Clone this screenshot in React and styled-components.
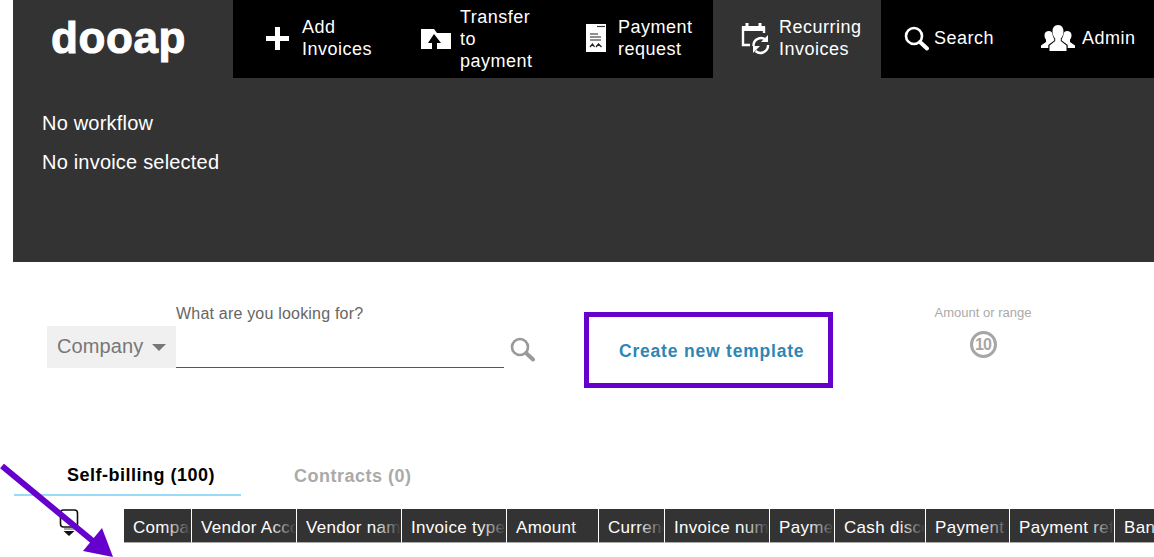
import React from "react";
import styled, { createGlobalStyle } from "styled-components";

const GlobalStyle = createGlobalStyle`
  html, body {
    margin: 0;
    padding: 0;
    background: #fff;
    font-family: "Liberation Sans", Arial, sans-serif;
    overflow: hidden;
  }
`;

const navItems = [
  { label: "Add Invoices", icon: <PlusIcon />, width: 170, pad: 32, gap: 12, textWidth: 80, lift: 2 },
  { label: "Transfer to payment", icon: <FolderIcon />, width: 160, pad: 18, gap: 9, textWidth: 80, lift: 0 },
  { label: "Payment request", icon: <DocIcon />, width: 150, pad: 23, gap: 12, textWidth: 90, lift: 2 },
  { label: "Recurring Invoices", icon: <CalendarIcon />, width: 168, pad: 28, gap: 8, textWidth: 90, lift: 2, active: true },
  { label: "Search", icon: <SearchIcon />, width: 139, pad: 23, gap: 5, textWidth: 80, lift: 2 },
  { label: "Admin", icon: <AdminIcon />, width: 134, pad: 21, gap: 7, textWidth: 70, lift: 2 },
];

const columns = [
  ["Company", 68],
  ["Vendor Account", 105],
  ["Vendor name", 105],
  ["Invoice type", 105],
  ["Amount", 92],
  ["Currency", 66],
  ["Invoice number", 105],
  ["Payment", 65],
  ["Cash discount", 91],
  ["Payment", 84],
  ["Payment reference", 105],
  ["Bank", 60],
];

export default function App() {
  return (
    <Page>
      <GlobalStyle />
      <Header>
        <TopRow>
          <Logo>dooap</Logo>
          <Nav>
            {navItems.map((item) => (
              <NavItem
                key={item.label}
                $width={item.width}
                $pad={item.pad}
                $gap={item.gap}
                $lift={item.lift}
                $active={item.active}
              >
                {item.icon}
                <NavLabel $width={item.textWidth}>{item.label}</NavLabel>
              </NavItem>
            ))}
          </Nav>
        </TopRow>
        <Status>
          <StatusLine>No workflow</StatusLine>
          <StatusLine>No invoice selected</StatusLine>
        </Status>
      </Header>

      <Toolbar>
        <SearchForm>
          <SearchLabel>What are you looking for?</SearchLabel>
          <Select>
            Company
            <Caret />
          </Select>
          <SearchInput />
        </SearchForm>
        <SearchButton>
          <SearchIcon color="#999" />
        </SearchButton>
        <CreateButton>Create new template</CreateButton>
        <Range>
          <RangeLabel>Amount or range</RangeLabel>
          <RangeBadge>10</RangeBadge>
        </Range>
      </Toolbar>

      <Tabs>
        <Tab $active>Self-billing (100)</Tab>
        <Tab>Contracts (0)</Tab>
      </Tabs>

      <TableRow>
        <ExportSlot>
          <ExportIcon />
        </ExportSlot>
        <TableHead>
          {columns.map(([name, width], i) => (
            <HeadCell key={i} $width={width}>
              {name}
            </HeadCell>
          ))}
        </TableHead>
      </TableRow>

      <Arrow viewBox="0 0 120 100" width="120" height="100">
        <line x1="2" y1="2" x2="94" y2="78" stroke="#6600cc" strokeWidth="6" />
        <polygon points="113,93 83,87 102,64" fill="#6600cc" />
      </Arrow>
    </Page>
  );
}

function PlusIcon() {
  return (
    <svg width="25" height="25" viewBox="0 0 25 25" fill="#fff" style={{ flex: "none" }}>
      <path d="M10 1h5v9h9v5h-9v9h-5v-9H1v-5h9z" />
    </svg>
  );
}

function FolderIcon() {
  return (
    <svg width="30" height="22" viewBox="0 0 30 22" style={{ flex: "none" }}>
      <path d="M0 1h13l3 4h14v16H0z" fill="#fff" />
      <path d="M13 6l7 9h-4v6h-5v-6H7z" fill="#000" />
    </svg>
  );
}

function DocIcon() {
  return (
    <svg width="20" height="28" viewBox="0 0 20 28" style={{ flex: "none" }}>
      <path d="M0 0h20v28H0z" fill="#fff" />
      <path d="M11 2.500h8" stroke="#333" strokeWidth="1.200" />
      <path d="M4 10h8M4 13h11M4 16h11" stroke="#222" strokeWidth="1.100" />
      <path d="M4 23l2.500-3 2 3M10 23l2.500-3 3 3" stroke="#222" strokeWidth="1.300" fill="none" />
    </svg>
  );
}

function CalendarIcon() {
  return (
    <svg width="30" height="34" viewBox="0 0 30 34" fill="none" stroke="#fff" style={{ flex: "none" }}>
      <path d="M9 24H2V7h21v5" strokeWidth="2.400" />
      <path d="M1 5h23v5H1z" fill="#fff" stroke="none" />
      <path d="M6 2v5M19 2v5" strokeWidth="3" />
      <path d="M12.500 25a7.500 7.500 0 0 1 12.500-6" strokeWidth="2.400" />
      <path d="M27 24a7.500 7.500 0 0 1-12.500 6" strokeWidth="2.400" />
      <path d="M27 14v7h-7z" fill="#fff" stroke="none" />
      <path d="M12 32v-7h7z" fill="#fff" stroke="none" />
    </svg>
  );
}

function SearchIcon({ color = "#fff" }) {
  return (
    <svg width="25" height="25" viewBox="0 0 25 25" fill="none" stroke={color} style={{ flex: "none" }}>
      <circle cx="10" cy="10" r="8" strokeWidth="2.600" />
      <path d="M16 16l7 6.500" strokeWidth="4" strokeLinecap="round" />
    </svg>
  );
}

function AdminIcon() {
  return (
    <svg width="34" height="26" viewBox="0 0 34 26" fill="#fff" style={{ flex: "none" }}>
      <path d="M17 0c4 0 5.500 3 5.500 6.500 0 3-1.200 5.500-2.700 7v2.500l5.700 4.500V26H8.500v-5.500l5.700-4.500v-2.500c-1.500-1.500-2.700-4-2.700-7C11.500 3 13 0 17 0z" />
      <path d="M8 6c2 0 3 1 3.300 2.500.3 2 1 4 2 5.500v1.500l-6 4.500V23H0v-2.500l5-3.500v-2.500C4 13.500 3.500 12 3.500 10 3.500 7.500 5.500 6 8 6z" />
      <path d="M26 6c-2 0-3 1-3.300 2.500-.3 2-1 4-2 5.500v1.500l6 4.500V23H34v-2.500l-5-3.500v-2.500c1-1 1.500-2.500 1.500-4.500C30.500 7.500 28.500 6 26 6z" />
    </svg>
  );
}

function ExportIcon() {
  return (
    <svg width="20" height="27" viewBox="0 0 20 27" fill="none">
      <rect x="1.500" y="1" width="17" height="17" rx="3" stroke="#111" strokeWidth="1.600" />
      <path d="M5 20h10" stroke="#555" strokeWidth="1" />
      <path d="M4.500 22h11L10 27z" fill="#111" />
    </svg>
  );
}

const Page = styled.div`
  position: relative;
  width: 1154px;
  height: 557px;
  padding-left: 13px;
  box-sizing: border-box;
  overflow: hidden;
`;

const Header = styled.header`
  background: #333;
  height: 262px;
  color: #fff;
`;

const TopRow = styled.div`
  display: flex;
  height: 78px;
`;

const Logo = styled.div`
  width: 220px;
  flex: none;
  box-sizing: border-box;
  padding: 10px 0 0 38px;
  font-size: 44px;
  line-height: 56px;
  font-weight: 700;
  letter-spacing: 0.6px;
  -webkit-text-stroke: 1px #fff;
`;

const Nav = styled.nav`
  display: flex;
  flex: 1;
  background: #000;
  overflow: hidden;
`;

const NavItem = styled.a`
  display: flex;
  align-items: center;
  flex: none;
  box-sizing: border-box;
  width: ${(p) => p.$width}px;
  padding-left: ${(p) => p.$pad}px;
  padding-bottom: ${(p) => p.$lift}px;
  gap: ${(p) => p.$gap}px;
  background: ${(p) => (p.$active ? "#333" : "transparent")};
`;

const NavLabel = styled.span`
  width: ${(p) => p.$width}px;
  font-size: 18px;
  line-height: 22px;
  letter-spacing: 0.5px;
`;

const Status = styled.div`
  padding: 26px 0 0 29px;
`;

const StatusLine = styled.div`
  font-size: 20px;
  line-height: 39px;
  letter-spacing: 0.2px;
`;

const Toolbar = styled.div`
  display: flex;
  align-items: flex-start;
  padding: 50px 0 0 34px;
`;

const SearchForm = styled.div`
  display: grid;
  grid-template-columns: 129px 328px;
  grid-template-rows: 14px 42px;
  flex: none;
`;

const SearchLabel = styled.div`
  grid-column: 2;
  font-size: 16px;
  line-height: 0;
  padding-top: 2px;
  letter-spacing: 0.2px;
  color: #666;
`;

const Select = styled.div`
  grid-row: 2;
  display: flex;
  align-items: center;
  gap: 9px;
  padding: 0 0 2px 10px;
  background: #f0f0f0;
  font-size: 20px;
  letter-spacing: 0.1px;
  color: #777;
`;

const Caret = styled.span`
  width: 0;
  height: 0;
  border-left: 7px solid transparent;
  border-right: 7px solid transparent;
  border-top: 7px solid #777;
  margin-top: 3px;
`;

const SearchInput = styled.div`
  grid-row: 2;
  border-bottom: 1px solid #555;
`;

const SearchButton = styled.div`
  flex: none;
  margin: 25px 0 0 6px;
  width: 25px;
`;

const CreateButton = styled.div`
  flex: none;
  box-sizing: border-box;
  width: 249px;
  height: 76px;
  margin-left: 49px;
  border: 5px solid #6600cc;
  display: flex;
  align-items: center;
  padding: 3px 0 0 30px;
  font-size: 17.500px;
  font-weight: 700;
  letter-spacing: 0.8px;
  color: #2e86b5;
`;

const Range = styled.div`
  flex: none;
  width: 100px;
  margin-left: 100px;
  display: flex;
  flex-direction: column;
  align-items: center;
`;

const RangeLabel = styled.div`
  font-size: 13px;
  line-height: 0;
  height: 18px;
  padding-top: 1px;
  color: #aaa;
  white-space: nowrap;
`;

const RangeBadge = styled.div`
  box-sizing: border-box;
  width: 27px;
  height: 27px;
  border: 3px solid #a6a6a6;
  border-radius: 50%;
  display: flex;
  align-items: center;
  justify-content: center;
  font-size: 16px;
  font-weight: 700;
  letter-spacing: -1px;
  color: #a6a6a6;
`;

const Tabs = styled.div`
  display: flex;
  margin: 73px 0 0 1px;
`;

const Tab = styled.div`
  box-sizing: border-box;
  width: ${(p) => (p.$active ? "227px" : "auto")};
  height: 35px;
  margin-left: ${(p) => (p.$active ? "0" : "53px")};
  padding-left: ${(p) => (p.$active ? "53px" : "0")};
  padding-top: ${(p) => (p.$active ? "3px" : "4px")};
  font-size: 18px;
  line-height: 22px;
  font-weight: 700;
  letter-spacing: 0.5px;
  color: ${(p) => (p.$active ? "#000" : "#aaa")};
  border-bottom: ${(p) => (p.$active ? "2px solid #9adcf8" : "none")};
`;

const TableRow = styled.div`
  display: flex;
  margin-top: 13px;
`;

const ExportSlot = styled.div`
  width: 111px;
  flex: none;
  padding-left: 46px;
  box-sizing: border-box;
`;

const TableHead = styled.div`
  display: flex;
  flex: none;
`;

const HeadCell = styled.div`
  position: relative;
  box-sizing: border-box;
  flex: none;
  width: ${(p) => p.$width}px;
  height: 34px;
  padding-left: 9px;
  background: #333;
  border-right: 1px solid #fff;
  border-bottom: 1px solid #aaa;
  color: #fff;
  font-size: 17px;
  letter-spacing: 0.3px;
  line-height: 38px;
  white-space: nowrap;
  overflow: hidden;

  &::after {
    content: "";
    position: absolute;
    top: 0;
    right: 0;
    bottom: 0;
    width: 26px;
    background: linear-gradient(to right, rgba(51, 51, 51, 0), #333);
  }
`;

const Arrow = styled.svg`
  position: absolute;
  left: 0;
  top: 464px;
`;
